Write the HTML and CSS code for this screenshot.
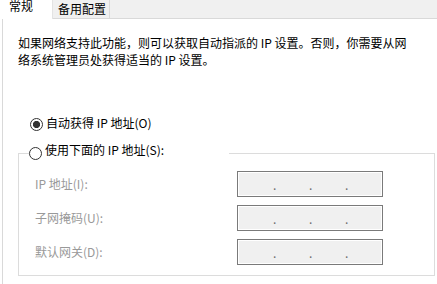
FILE: index.html
```html
<!DOCTYPE html>
<html lang="zh-CN">
<head>
<meta charset="UTF-8" />
<title>Internet 协议版本 4 (TCP/IPv4) 属性</title>
<link rel="stylesheet" href="styles.css">
</head>
<body>
<div class="tabs">
  <div class="tab active">常规</div>
  <div class="tab">备用配置</div>
</div>
<div class="panel">
  <p class="intro">如果网络支持此功能，则可以获取自动指派的 IP 设置。否则，你需要从网络系统管理员处获得适当的 IP 设置。</p>

  <label class="option auto">
    <input type="radio" name="ipmode" checked>
    <span>自动获得 IP 地址(O)</span>
  </label>

  <fieldset class="group">
    <legend>
      <label class="option">
        <input type="radio" name="ipmode">
        <span>使用下面的 IP 地址(S):</span>
      </label>
    </legend>
    <div class="fields">
      <span class="field-label">IP 地址(I):</span>
      <div class="ipbox"><span></span><i>.</i><span></span><i>.</i><span></span><i>.</i><span></span></div>

      <span class="field-label">子网掩码(U):</span>
      <div class="ipbox"><span></span><i>.</i><span></span><i>.</i><span></span><i>.</i><span></span></div>

      <span class="field-label">默认网关(D):</span>
      <div class="ipbox"><span></span><i>.</i><span></span><i>.</i><span></span><i>.</i><span></span></div>
    </div>
  </fieldset>
</div>
</body>
</html>
```

FILE: styles.css
```css
body {
  margin: 0;
  background: #fff;
  color: #000;
  font-family: "Noto Sans CJK SC", "Noto Sans", sans-serif;
  font-size: 12px;
  overflow: hidden;
}
.tabs {
  display: flex;
  height: 18px;
  background: #f0f0f0;
  border-bottom: 1px solid #d9d9d9;
}
.tab {
  line-height: 17px;
  padding: 0 3px 0 5px;
  border-right: 1px solid #d9d9d9;
}
.tab.active {
  box-sizing: border-box;
  width: 53px;
  height: 19px;
  padding-left: 9px;
  line-height: 12px;
  background: #fff;
  border-right: 1px solid #e3e3e3;
}
.panel {
  margin-left: 2px;
  border-left: 1px solid #d9d9d9;
  padding: 15px 0 10px 15px;
}
.intro {
  margin: 0;
  width: 395px;
  line-height: 17px;
}
.option {
  display: flex;
  align-items: flex-start;
  line-height: 16px;
}
.option input {
  appearance: none;
  -webkit-appearance: none;
  box-sizing: border-box;
  width: 13px;
  height: 13px;
  margin: 3px 3px 0 0;
  border: 1px solid #333;
  border-radius: 50%;
  background: #fff;
}
.option input:checked {
  background: radial-gradient(circle, #333 0 3.3px, #fff 3.9px);
}
.auto {
  margin: 47px 0 0 12px;
}
.group {
  box-sizing: border-box;
  width: 417px;
  margin: 11px 0 0;
  padding: 0 0 10px;
  border: 1px solid #dcdcdc;
  min-width: 0;
}
.group legend {
  width: 200px;
  margin-left: 10px;
  padding: 0 0 4px;
  background: #fff;
}
.group legend .option input {
  margin-top: 5px;
}
.fields {
  display: grid;
  grid-template-columns: 202px 146px;
  grid-auto-rows: 26px;
  row-gap: 8px;
  padding: 7px 0 0 16px;
  align-items: center;
}
.field-label {
  color: #999;
  line-height: 16px;
}
.ipbox {
  box-sizing: border-box;
  height: 26px;
  display: flex;
  align-items: center;
  border: 1px solid #7a7a7a;
  box-shadow: inset 0 0 0 1px #fff;
  background: #f0f0f0;
  color: #6d6d6d;
  padding: 0 1px;
}
.ipbox span {
  flex: 1;
}
.ipbox i {
  font-style: normal;
  width: 2px;
  line-height: 16px;
  margin-top: 2px;
}
```
